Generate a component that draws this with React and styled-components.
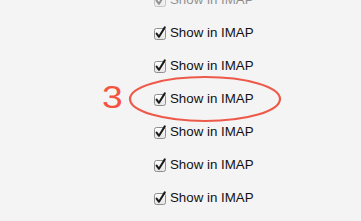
import styled, { createGlobalStyle } from "styled-components";

const GlobalStyle = createGlobalStyle`
  html, body {
    margin: 0;
    padding: 0;
    background: #f4f4f4;
  }
  body {
    font-family: "Liberation Sans", Arial, Helvetica, sans-serif;
    overflow: hidden;
  }
`;

const Page = styled.div`
  width: 361px;
  height: 221px;
  overflow: hidden;
  background: #f4f4f4;
`;

const List = styled.ul`
  list-style: none;
  margin: -17px 0 0 0;
  padding: 0 0 0 153px;
  display: flex;
  flex-direction: column;
`;

const Row = styled.li`
  position: relative;
  height: 33px;
  display: flex;
  align-items: center;
  gap: 3px;
  opacity: ${(p) => (p.$faded ? 0.45 : 1)};
`;

const Label = styled.span`
  font-size: 13.3px;
  color: #111;
  line-height: 1;
  padding-top: 1px;
`;

const Step = styled.span`
  position: absolute;
  left: -51px;
  top: 50%;
  transform: translateY(-54%) scaleX(1.2);
  transform-origin: left center;
  font-size: 31px;
  font-weight: 400;
  color: #f4533f;
  line-height: 1;
`;

const Ring = styled.svg`
  position: absolute;
  left: -25px;
  top: -7px;
  overflow: visible;
  pointer-events: none;
`;

function Checkbox() {
  return (
    <svg width="14" height="14" viewBox="0 0 14 14">
      <defs>
        <linearGradient id="cb" x1="0" y1="0" x2="0" y2="1">
          <stop offset="0" stopColor="#ffffff" />
          <stop offset="1" stopColor="#e4e4e4" />
        </linearGradient>
      </defs>
      <rect x="1.5" y="2.5" width="11" height="11" rx="2" fill="url(#cb)" stroke="#8e8e8e" strokeWidth="1" />
      <path d="M3.6 7.6 L6 10.8 L11.8 1.4" fill="none" stroke="#1a1a1a" strokeWidth="2" strokeLinecap="round" strokeLinejoin="round" />
    </svg>
  );
}

const rows = [0, 1, 2, 3, 4, 5, 6];

export default function App() {
  return (
    <>
      <GlobalStyle />
      <Page>
        <List>
          {rows.map((i) => (
            <Row key={i} $faded={i === 0}>
              <Checkbox />
              <Label>Show in IMAP</Label>
              {i === 3 && (
                <>
                  <Step>3</Step>
                  <Ring width="154" height="48" viewBox="0 0 154 48">
                    <ellipse cx="77" cy="24" rx="75" ry="22" fill="none" stroke="#ee5a4a" strokeWidth="2.2" />
                  </Ring>
                </>
              )}
            </Row>
          ))}
        </List>
      </Page>
    </>
  );
}
